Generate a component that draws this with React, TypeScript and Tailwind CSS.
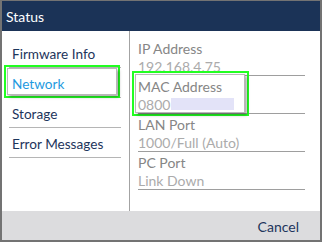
import React from "react";

const MENU = ["Firmware Info", "Network", "Storage", "Error Messages"];

const FIELDS = [
  { label: "IP Address", value: "192.168.4.75" },
  { label: "MAC Address", value: "0800", mac: true },
  { label: "LAN Port", value: "1000/Full (Auto)" },
  { label: "PC Port", value: "Link Down" },
];

export default function App() {
  return (
    <div
      className="flex h-[242px] w-[322px] flex-col border-x-2 border-b-2 border-t border-[#737373] bg-white text-[13px]"
      style={{ fontFamily: "Lato, 'Open Sans', sans-serif" }}
    >
      {/* Title bar */}
      <div className="flex h-[30px] items-center bg-[#1b3357] px-[4px] pt-px text-[14px] text-white">Status</div>

      <div className="flex h-[180px]">
        {/* Menu */}
        <div className="w-[128px] border-r border-[#a3a3a3] pl-[7px] pt-[7px]">
          <div className="w-[112px]">
            {MENU.map((m) => {
              const active = m === "Network";
              return (
                <div
                  key={m}
                  className="relative flex h-[30px] items-center border-b border-[#b5b5b5] pl-[3px] pt-[3px] text-[13.6px]"
                >
                  {active && (
                    <>
                      <div className="absolute left-[-5px] right-[1px] top-[-3px] bottom-[-1px] border-2 border-[#22ff22]" />
                      <div className="absolute left-[-2px] right-[4px] top-0 bottom-[2px] border border-[#b8b8b8] bg-white shadow-[2px_2px_3px_rgba(0,0,0,0.35)]" />
                    </>
                  )}
                  <span className={`relative ${active ? "text-[#1f9ae0]" : "text-[#1d355c]"}`}>{m}</span>
                </div>
              );
            })}
          </div>
        </div>

        {/* Details */}
        <div className="flex-1 pl-[8px] pr-[15px] pt-[7px] text-[14px]">
          {FIELDS.map((f) => (
            <div key={f.label} className="relative border-b border-[#9e9e9e]">
              {f.mac && (
                <>
                  <div className="absolute left-[-6px] top-[-5px] h-[45px] w-[117px] border-2 border-[#22ff22]" />
                  <div className="absolute left-[-3px] top-[-2px] h-[39px] w-[110px] border border-[#b8b8b8] bg-white shadow-[2px_2px_3px_rgba(0,0,0,0.35)]" />
                </>
              )}
              <div className="relative flex h-[19px] items-center pt-px text-[#868686]">{f.label}</div>
              <div className="relative flex h-[18px] items-center text-[#ababab]">
                {f.value}
                {f.mac && <span className="ml-px h-[12px] w-[63px] bg-[#e3e3f8]" />}
              </div>
            </div>
          ))}
        </div>
      </div>

      {/* Footer */}
      <div className="flex flex-1 items-center justify-end bg-[#dcdcde] pr-[21px] pt-px text-[14px] text-[#1d355c]">
        Cancel
      </div>
    </div>
  );
}
